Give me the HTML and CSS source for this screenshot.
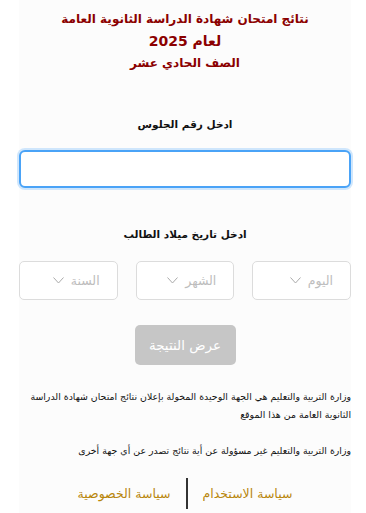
FILE: index.html
```html
<!DOCTYPE html>
<html lang="ar" dir="rtl">
<head>
    <meta charset="UTF-8">
    <meta name="viewport" content="width=device-width, initial-scale=1.0">
    <title>نتائج الامتحانات</title>
    <link rel="stylesheet" href="styles.css">
</head>
<body>
    <div class="page">
        <div class="title">
            <div>نتائج امتحان شهادة الدراسة الثانوية العامة</div>
            <div class="year">لعام 2025</div>
            <div>الصف الحادي عشر</div>
        </div>

        <form class="form">
            <label class="lbl seat-lbl">ادخل رقم الجلوس</label>
            <input type="text" class="seat">

            <label class="lbl birth-lbl">ادخل تاريخ ميلاد الطالب</label>
            <div class="dates">
                <div class="sel"><span>اليوم</span><svg class="arrow" width="11" height="7" viewBox="0 0 11 7"><polyline points="0.5,0.5 5.5,6 10.5,0.5" fill="none" stroke="#aaa" stroke-width="1"/></svg></div>
                <div class="sel"><span>الشهر</span><svg class="arrow" width="11" height="7" viewBox="0 0 11 7"><polyline points="0.5,0.5 5.5,6 10.5,0.5" fill="none" stroke="#aaa" stroke-width="1"/></svg></div>
                <div class="sel"><span>السنة</span><svg class="arrow" width="11" height="7" viewBox="0 0 11 7"><polyline points="0.5,0.5 5.5,6 10.5,0.5" fill="none" stroke="#aaa" stroke-width="1"/></svg></div>
            </div>

            <button type="button" class="show-btn" disabled>عرض النتيجة</button>
        </form>

        <p class="note">وزارة التربية والتعليم هي الجهة الوحيدة المخولة بإعلان نتائج امتحان شهادة الدراسة الثانوية العامة من هذا الموقع</p>
        <p class="note">وزارة التربية والتعليم غير مسؤولة عن أية نتائج تصدر عن أي جهة أخرى</p>

        <div class="links">
            <a href="#">سياسة الاستخدام</a>
            <span class="bar"></span>
            <a href="#">سياسة الخصوصية</a>
        </div>
    </div>
</body>
</html>
```

FILE: styles.css
```css
body {
    margin: 0;
    background: #fff;
    font-family: "DejaVu Sans", "Liberation Sans", sans-serif;
}
.page {
    margin: 0 15px 0 19px;
    padding: 8px 0 0;
    background: #fcfcfc;
    height: 505px;
}
.title {
    text-align: center;
    color: #8b0000;
    font-weight: bold;
    font-size: 12px;
    line-height: 22px;
}
.title .year {
    font-size: 14px;
}
.form {
    display: flex;
    flex-direction: column;
    align-items: center;
}
.lbl {
    font-weight: bold;
    font-size: 10.5px;
    color: #111;
}
.seat-lbl {
    margin-top: 44px;
}
.seat {
    box-sizing: border-box;
    width: 100%;
    height: 38px;
    margin-top: 20px;
    border: 2px solid #4aa3f7;
    border-radius: 6px;
    box-shadow: 0 0 0 2px #cfe6fc;
    background: #fff;
    outline: none;
}
.birth-lbl {
    margin-top: 40px;
}
.dates {
    display: flex;
    gap: 18px;
    width: 100%;
    margin-top: 21px;
}
.sel {
    flex: 1;
    height: 39px;
    box-sizing: border-box;
    border: 1px solid #dcdcdc;
    border-radius: 5px;
    background: #fff;
    display: flex;
    align-items: center;
    padding: 0 17px 0 0;
    gap: 7px;
    color: #bdbdbd;
    font-size: 12.5px;
}
.show-btn {
    margin-top: 25px;
    width: 101px;
    height: 40px;
    border: 0;
    border-radius: 5px;
    background: #c6c6c6;
    color: #fff;
    font-family: inherit;
    font-size: 13.5px;
}
.note {
    margin: 23px 0 0;
    font-size: 9.4px;
    line-height: 18px;
    color: #111;
}
.note + .note {
    margin-top: 18px;
}
.links {
    display: flex;
    justify-content: center;
    align-items: center;
    gap: 15px;
    margin-top: 18px;
}
.links a {
    color: #b8860b;
    text-decoration: none;
    font-size: 12.5px;
}
.bar {
    width: 2px;
    height: 31px;
    background: #333;
}
```
